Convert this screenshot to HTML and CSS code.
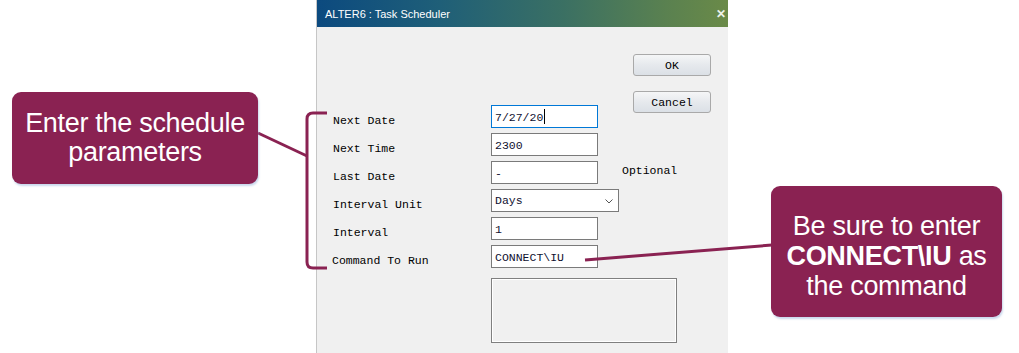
FILE: index.html
```html
<!DOCTYPE html>
<html lang="en">
<head>
    <meta charset="UTF-8">
    <title>Task Scheduler</title>
    <link rel="stylesheet" href="styles.css">
</head>
<body>
    <div class="dialog">
        <div class="titlebar">
            <span class="title">ALTER6 : Task Scheduler</span>
            <span class="close">&#x2715;</span>
        </div>
        <div class="content">
            <div class="form">
                <div class="row">
                    <label>Next Date</label>
                    <div class="field focused">7/27/20<span class="caret"></span></div>
                </div>
                <div class="row">
                    <label>Next Time</label>
                    <div class="field">2300</div>
                </div>
                <div class="row">
                    <label>Last Date</label>
                    <div class="field">-</div>
                    <span class="note">Optional</span>
                </div>
                <div class="row">
                    <label>Interval Unit</label>
                    <div class="field select">Days
                        <svg class="chevron" width="8" height="5" viewBox="0 0 8 5"><path d="M0.5 0.5 L4 4 L7.5 0.5" fill="none" stroke="#555" stroke-width="1"/></svg>
                    </div>
                </div>
                <div class="row">
                    <label>Interval</label>
                    <div class="field">1</div>
                </div>
                <div class="row cmd">
                    <label>Command To Run</label>
                    <div class="field">CONNECT\IU</div>
                </div>
                <div class="row">
                    <label></label>
                    <div class="memo"></div>
                </div>
            </div>
            <div class="buttons">
                <button type="button">OK</button>
                <button type="button">Cancel</button>
            </div>
        </div>
    </div>

    <!-- annotations -->
    <svg class="connectors" width="1019" height="353" viewBox="0 0 1019 353">
        <path d="M258 133 L307 156" stroke="#8a2252" stroke-width="3" fill="none"/>
        <path d="M327 113 H313 Q307 113 307 119 V262 Q307 268 313 268 H327" stroke="#8a2252" stroke-width="3" fill="none"/>
        <path d="M585 260 L772 245" stroke="#8a2252" stroke-width="3" fill="none"/>
    </svg>
    <div class="callout left"><span>Enter the schedule<br>parameters</span></div>
    <div class="callout right"><span>Be sure to enter<br><b>CONNECT\IU</b> as<br>the command</span></div>
</body>
</html>
```

FILE: styles.css
```css
body { margin: 0; background: #fff; font-family: "Liberation Mono", monospace; font-size: 11.5px; color: #000; }

.dialog { margin-left: 316px; width: 412px; height: 353px; background: #f0f0f0; border-left: 1px solid #c6c6c6; box-sizing: border-box; }
.titlebar { height: 27px; display: flex; align-items: center; justify-content: space-between; padding: 0 2px 0 8px; background: linear-gradient(90deg, #0c4a7f 0%, #1f5f78 30%, #3b7063 60%, #5a8150 85%, #6a8a48 100%); color: #fff; font-family: "Liberation Sans", Arial, sans-serif; font-size: 11px; }
.close { font-size: 12px; font-weight: bold; color: #eef2ea; }

.content { display: flex; }
.form { flex: none; width: 300px; padding: 78px 0 0 16px; }
.row { display: flex; height: 23px; margin-bottom: 5px; }
.row.cmd { margin-top: 1px; margin-bottom: 10px; }
.row.cmd label { margin-left: -1px; width: 159px; }
label { width: 158px; flex: none; line-height: 23px; padding-top: 4px; box-sizing: border-box; }

.field { flex: none; width: 107px; height: 23px; box-sizing: border-box; border: 1px solid #7a7a7a; background: #fff; padding: 2px 3px 0; line-height: 19px; white-space: nowrap; color: #101030; }
.field.focused { border-color: #0078d7; }
.caret { display: inline-block; width: 1px; height: 15px; background: #000; vertical-align: -3px; margin-left: 1px; }
.field.select { width: 128px; display: flex; justify-content: space-between; align-items: center; padding: 0 5px 0 3px; line-height: 21px; }
.chevron { flex: none; margin-top: 1px; }
.note { flex: none; margin-left: 24px; line-height: 20px; white-space: nowrap; }

.memo { flex: none; width: 186px; height: 65px; box-sizing: border-box; border: 1px solid #7f7f7f; box-shadow: inset 1px 1px 0 #fff, inset -1px -1px 0 #fff; background: #f0f0f0; }

.buttons { flex: none; display: flex; flex-direction: column; gap: 15px; padding: 27px 0 0 0; }
button { width: 78px; height: 22px; padding: 0; border: 1px solid #a9a9a9; border-radius: 3px; background: linear-gradient(#f5f6f7, #e6e9ed 50%, #dbe0e6); font-family: "Liberation Mono", monospace; font-size: 11.5px; color: #000; }

.connectors { position: absolute; top: 0; left: 0; }
.callout { position: absolute; box-sizing: border-box; background: #8a2252; color: #fff; border-radius: 9px; font-family: "Liberation Sans", Arial, sans-serif; font-size: 27px; letter-spacing: -0.3px; line-height: 29px; text-align: center; display: flex; align-items: center; justify-content: center; box-shadow: 1px 2px 2px rgba(140, 170, 215, 0.45); }
.callout.left { left: 12px; top: 92px; width: 246px; height: 92px; }
.callout.right { left: 771px; top: 186px; width: 231px; height: 131px; line-height: 30px; padding-top: 8px; }
.callout b { font-weight: bold; }
```
